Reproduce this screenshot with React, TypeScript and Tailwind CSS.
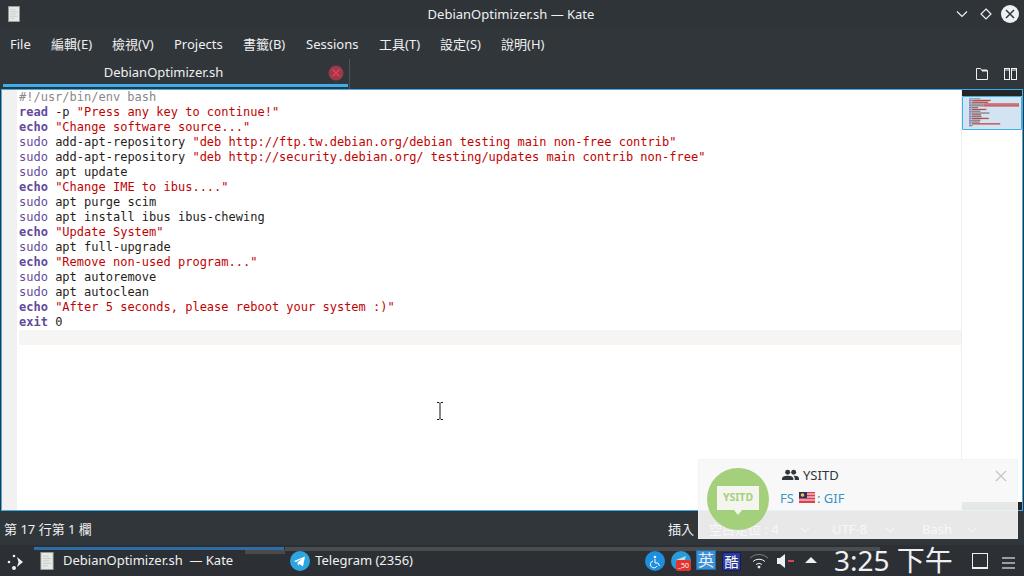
import React from "react";

const ui = { fontFamily: '"Noto Sans","Noto Sans CJK TC",sans-serif' };
const mono = { fontFamily: '"DejaVu Sans Mono",monospace' };

type Tok = [string, string];
const K = "font-bold text-[#644a9b]";
const S = "text-[#bf0303]";
const C = "text-[#644a9b]";
const N = "text-[#1f1c1b]";
const lines: Tok[][] = [
  [["#!/usr/bin/env bash", "text-[#898887]"]],
  [["read", K], [" -p ", N], ['"Press any key to continue!"', S]],
  [["echo", K], [" ", N], ['"Change software source..."', S]],
  [["sudo", C], [" add-apt-repository ", N], ['"deb http://ftp.tw.debian.org/debian testing main non-free contrib"', S]],
  [["sudo", C], [" add-apt-repository ", N], ['"deb http://security.debian.org/ testing/updates main contrib non-free"', S]],
  [["sudo", C], [" apt update", N]],
  [["echo", K], [" ", N], ['"Change IME to ibus...."', S]],
  [["sudo", C], [" apt purge scim", N]],
  [["sudo", C], [" apt install ibus ibus-chewing", N]],
  [["echo", K], [" ", N], ['"Update System"', S]],
  [["sudo", C], [" apt full-upgrade", N]],
  [["echo", K], [" ", N], ['"Remove non-used program..."', S]],
  [["sudo", C], [" apt autoremove", N]],
  [["sudo", C], [" apt autoclean", N]],
  [["echo", K], [" ", N], ['"After 5 seconds, please reboot your system :)"', S]],
  [["exit", K], [" 0", N]],
];

const menu: [string, string][] = [
  ["File", "w-[41px]"], ["編輯(E)", "w-[61px]"], ["檢視(V)", "w-[62px]"], ["Projects", "w-[69px]"],
  ["書籤(B)", "w-[63px]"], ["Sessions", "w-[73px]"], ["工具(T)", "w-[61px]"], ["設定(S)", "w-[61px]"], ["說明(H)", "w-[60px]"],
];

function DocIcon({ className }: { className: string }) {
  return (
    <svg className={className} viewBox="0 0 16 22">
      <rect x="0.5" y="0.5" width="15" height="21" fill="#e8e8e4" stroke="#9a9a9a" />
      <path d="M3 5h7M3 8h10M3 11h8M3 14h10M3 17h6" stroke="#b9c6cf" strokeWidth="1" />
    </svg>
  );
}

function Chevron({ className }: { className: string }) {
  return (
    <svg className={className} width="10" height="6" viewBox="0 0 10 6" fill="none" stroke="#ffffff" strokeWidth="1">
      <path d="M1 1l4 4 4-4" />
    </svg>
  );
}

function Minimap() {
  const rects: React.ReactNode[] = [];
  lines.forEach((l, i) => {
    let col = 0;
    l.forEach(([t, c], j) => {
      const fill = c === S ? "#bf0303" : c === N ? "#5a5655" : c === K || c === C ? "#644a9b" : "#898887";
      if (t.trim().length > 0) {
        rects.push(<rect key={`${i}-${j}`} x={col * 0.6} y={i * 1.8} width={t.length * 0.6} height={1.3} fill={fill} />);
      }
      col += t.length;
    });
  });
  return (
    <svg className="absolute left-[6px] top-[1px]" width="50" height="30" viewBox="0 0 50 30" opacity="0.7">
      {rects}
    </svg>
  );
}

export default function App() {
  return (
    <div style={ui} className="w-[1024px] h-[576px] overflow-hidden relative flex flex-col bg-[#31363b] text-[#eff0f1] text-[13px]">
      {/* title bar */}
      <div className="h-[29px] shrink-0 relative flex items-center justify-center bg-[#2f3439]">
        <DocIcon className="absolute left-[7px] top-[6px] w-[14px] h-[16px]" />
        <span className="text-[13px] text-[#eff0f1] mr-[2px]">DebianOptimizer.sh — Kate</span>
        <div className="absolute right-[5px] top-[5px] flex items-center">
          <svg width="14" height="14" viewBox="0 0 14 14" fill="none" stroke="#eff0f1" strokeWidth="1.2"><path d="M2 4.5l5 5 5-5" /></svg>
          <svg className="ml-[11px]" width="12" height="12" viewBox="0 0 12 12" fill="none" stroke="#eff0f1" strokeWidth="1.2"><path d="M6 1l5 5-5 5-5-5z" /></svg>
          <svg className="ml-[9px]" width="18" height="18" viewBox="0 0 18 18"><circle cx="9" cy="9" r="9" fill="#eff0f1" /><path d="M5 5l8 8M13 5l-8 8" stroke="#31363b" strokeWidth="1.5" /></svg>
        </div>
      </div>
      {/* menu */}
      <div className="h-[30px] shrink-0 flex items-center pl-[10px] pt-[1px] text-[13px]">
        {menu.map(([m, w]) => <span key={m} className={`${w} shrink-0`}>{m}</span>)}
      </div>
      {/* tabs */}
      <div className="h-[30px] shrink-0 flex relative">
        <div className="ml-[3px] w-[345px] h-[28px] relative flex items-center justify-center border-b-[3px] border-b-[#3daee9] pr-[24px] pt-[3px]">
          <span className="text-[13px]">DebianOptimizer.sh</span>
          <svg className="absolute right-[4px] top-[6px]" width="16" height="16" viewBox="0 0 16 16"><circle cx="8" cy="8" r="7.5" fill="#9c3a4a" /><path d="M4.5 4.5l7 7M11.5 4.5l-7 7" stroke="#da4453" strokeWidth="1.5" /></svg>
        </div>
        <div className="w-px h-[30px] bg-[#4d5359] ml-[1px]" />
        <div className="ml-auto pr-[7px] flex gap-[15px] pt-[8px]">
          <svg width="14" height="14" viewBox="0 0 14 14" fill="none" stroke="#eff0f1"><path d="M1.5 1.5h4l1.5 2h5.5v9h-11z" /><path d="M7 3h5v1H7z" fill="#eff0f1" /></svg>
          <svg width="13" height="14" viewBox="0 0 13 14" fill="none" stroke="#eff0f1"><rect x="0.5" y="1.5" width="5" height="11" /><rect x="7.5" y="1.5" width="5" height="11" /><path d="M1 3h4M8 3h4" /></svg>
        </div>
      </div>
      {/* editor */}
      <div className="h-[422px] shrink-0 mx-px border border-[#3daee9] bg-white flex overflow-hidden">
        <div className="w-[15px] shrink-0 bg-[#f1f1f1]" />
        <div style={mono} className="flex-1 min-w-0 text-[12px] leading-[15px] pl-[2px]">
          {lines.map((l, i) => (
            <div key={i} className="h-[15px] whitespace-pre">
              {l.map(([t, c], j) => <span key={j} className={c}>{t}</span>)}
            </div>
          ))}
          <div className="h-[15px] bg-[#f6f5f4]" />
        </div>
        <div className="w-[61px] shrink-0 border-l border-[#eeeeee] flex flex-col">
          <div className="h-[6px] bg-[#232629]" />
          <div className="h-[34px] bg-[#d2e4f1] border border-[#3daee9] rounded-[1px] relative">
            <Minimap />
          </div>
          <div className="mt-auto h-[8px] bg-[#232629]" />
        </div>
      </div>
      {/* status */}
      <div className="h-[34px] shrink-0 flex items-center text-[13px] pt-[4px]">
        <span className="w-[668px] shrink-0 pl-[4px] text-[#eff0f1]">第 17 行第 1 欄</span>
        <span className="w-[41px] shrink-0">插入</span>
        <span className="w-[91px] shrink-0">空白定位 : 4</span>
        <Chevron className="shrink-0" />
        <span className="ml-[22px] w-[53px] shrink-0">UTF-8</span>
        <Chevron className="shrink-0" />
        <span className="ml-[27px] w-[45px] shrink-0">Bash</span>
        <Chevron className="shrink-0" />
      </div>
      {/* taskbar */}
      <div className="flex-1 relative flex items-center bg-[#2c3035]">
        <div className="absolute left-[245px] top-[5px] w-[40px] h-[4px] bg-[#4a4a4a]" />
        <div className="absolute left-[34px] top-[2px] w-[250px] h-[3px] bg-[#2d6ea8]" />
        <div className="absolute left-[285px] top-[2px] w-[595px] h-[4px] bg-[#4a4d50]" />
        <svg className="ml-[6px] mt-[2px]" width="18" height="18" viewBox="0 0 18 18" fill="#eff0f1">
          <circle cx="3" cy="9" r="1.3" /><circle cx="8" cy="3" r="1.3" /><circle cx="8" cy="15" r="2" /><path d="M11 4l6 5-6 5 1.5-5z" />
        </svg>
        <DocIcon className="ml-[16px] mt-[1px] w-[14px] h-[18px]" />
        <span className="ml-[9px] text-[13px] text-[#eff0f1] whitespace-pre">DebianOptimizer.sh  — Kate</span>
        <svg className="ml-[57px]" width="20" height="20" viewBox="0 0 20 20"><circle cx="10" cy="10" r="10" fill="#2ca5e0" /><path d="M4 10l11-4.500-2 10-3.500-2.500-1.500 1.500-.5-3 5-4-6.500 3.500z" fill="#fff" /></svg>
        <span className="ml-[5px] text-[13px] text-[#eff0f1]">Telegram (2356)</span>
        <div className="ml-[232px] flex items-center h-full relative w-[369px]">
          <svg className="absolute left-0 top-[6px]" width="20" height="20" viewBox="0 0 20 20"><circle cx="10" cy="10" r="10" fill="#1d8fe0" /><circle cx="10" cy="6" r="1.300" fill="#fff" /><path d="M10 8v4h3l1.500 3M8 10a3.500 3.500 0 1 0 4 5" stroke="#fff" fill="none" /></svg>
          <div className="absolute left-[26px] top-[6px] w-[24px] h-[22px]">
            <svg width="20" height="20" viewBox="0 0 20 20"><circle cx="10" cy="10" r="10" fill="#2c9ad8" /><path d="M5 9l10-4-2 6z" fill="#ffffff" opacity="0.7" /></svg>
            <span className="absolute left-[5px] top-[9px] w-[15px] h-[11px] rounded-[2px] bg-[#e5322d] text-white text-[7px] leading-[11px] text-center">_50</span>
          </div>
          <span className="absolute left-[51px] top-[5px] w-[20px] h-[20px] bg-[#3f8fd0] border border-[#1e6fb0] text-[#e6f3ff] text-[16px] leading-[18px] text-center">英</span>
          <span className="absolute left-[77px] top-[7px] w-[19px] h-[19px] bg-[#2b3a9a] border border-[#131c5c] rounded-[2px] text-white text-[14px] leading-[17px] text-center">酷</span>
          <svg className="absolute left-[104px] top-[7px]" width="20" height="18" viewBox="0 0 20 18" fill="none" stroke="#eff0f1"><path d="M1 6a13 13 0 0 1 18 0" opacity="0.4" /><path d="M4 9.500a9 9 0 0 1 12 0M7 12.500a4.500 4.500 0 0 1 6 0" /><circle cx="10" cy="15" r="1" fill="#eff0f1" /></svg>
          <svg className="absolute left-[132px] top-[8px]" width="18" height="16" viewBox="0 0 18 16"><path d="M0 5h3l5-4v14l-5-4H0z" fill="#eff0f1" /><path d="M11 8h6" stroke="#da4453" strokeWidth="2" /></svg>
          <svg className="absolute left-[160px] top-[11px]" width="12" height="8" viewBox="0 0 12 8"><path d="M6 1l6 6H0z" fill="#eff0f1" /></svg>
          <span className="absolute left-[189px] top-[1px] text-[28px] leading-[29px] whitespace-nowrap text-[#eff0f1]">3:25 下午</span>
          <span className="absolute left-[327px] top-[8px] w-[16px] h-[16px] border border-[#eff0f1] border-b-2" />
        </div>
        <div className="absolute right-[9px] top-[12px] w-[13px] flex flex-col gap-[3px]">
          <div className="h-[2px] bg-[#9a9ea2]" /><div className="h-[2px] bg-[#9a9ea2]" /><div className="h-[2px] bg-[#9a9ea2]" />
        </div>
      </div>
      {/* notification */}
      <div className="absolute left-[698px] top-[459px] w-[320px] h-[80px] bg-[#f7f7f7]/[0.92] border border-[#f0f0f0]/60">
        <svg className="absolute left-[8px] top-[8px]" width="62" height="62" viewBox="0 0 62 62">
          <circle cx="31" cy="31" r="31" fill="#a4d07c" />
          <path d="M10 18h42v24H35l-4 5-4-5H10z" fill="#f5f5f0" />
        </svg>
        <span className="absolute left-[22px] top-[30px] w-[34px] text-center text-[10.5px] font-bold text-[#a4d07c]">YSITD</span>
        <svg className="absolute left-[83px] top-[9px]" width="17" height="12" viewBox="0 0 24 16" fill="#31363b">
          <circle cx="8" cy="4" r="3.500" /><circle cx="16.500" cy="4" r="3.500" /><path d="M0 15v-2c0-3 5-4 8-4s8 1 8 4v2zM17.500 9c3 0 6.500 1 6.500 4v2h-6v-2c0-2-1-3-2-4z" />
        </svg>
        <span className="absolute left-[104px] top-[6px] text-[13px] text-[#31363b]">YSITD</span>
        <span className="absolute left-[81px] top-[29px] text-[13px] text-[#3a94c4]">FS</span>
        <svg className="absolute left-[100px] top-[32px]" width="16" height="11" viewBox="0 0 16 11">
          <rect width="16" height="11" fill="#d9414e" /><path d="M0 2h16M0 5h16M0 8h16" stroke="#f5f5f5" strokeWidth="1" /><rect width="8" height="6" fill="#29306e" /><circle cx="3.500" cy="3" r="1.800" fill="#f0c83a" />
        </svg>
        <span className="absolute left-[118px] top-[29px] text-[13px] text-[#3a94c4]">: GIF</span>
        <svg className="absolute right-[10px] top-[10px]" width="12" height="12" viewBox="0 0 12 12" stroke="#c4c4c4" strokeWidth="1.200"><path d="M1 1l10 10M11 1L1 11" /></svg>
      </div>
      {/* I-beam cursor */}
      <svg className="absolute left-[436px] top-[402px]" width="8" height="18" viewBox="0 0 8 18" fill="none" stroke="#111"><path d="M1 .5h2l1 1 1-1h2M1 17.500h2l1-1 1 1h2M4 1.500v15" /></svg>
    </div>
  );
}
